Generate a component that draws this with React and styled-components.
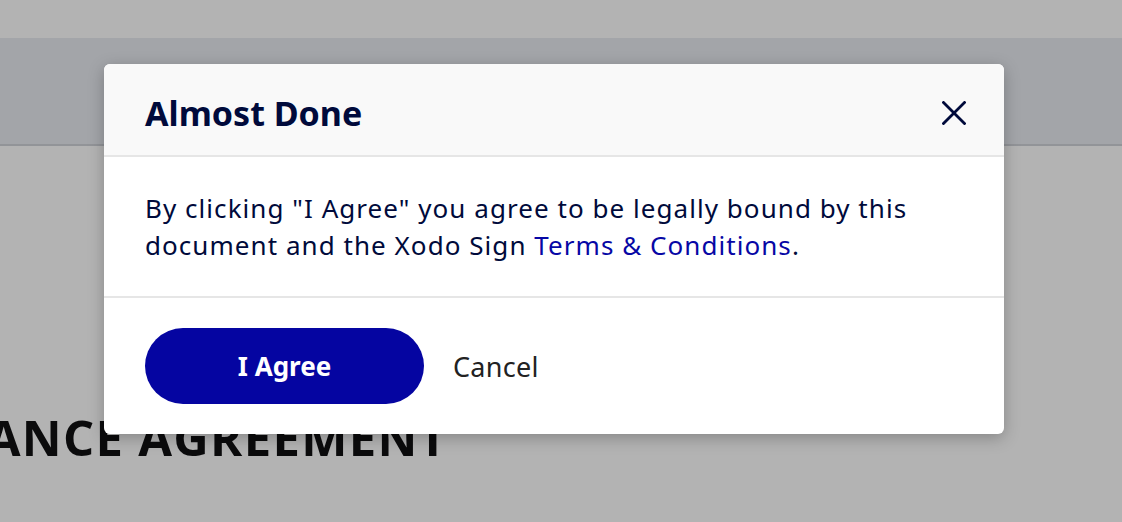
import React from 'react';
import styled, { createGlobalStyle } from 'styled-components';

const GlobalStyle = createGlobalStyle`
  html, body {
    margin: 0;
    padding: 0;
    background: #b3b3b3;
    overflow: hidden;
  }
  * { box-sizing: border-box; }
`;

const Page = styled.div`
  position: relative;
  width: 1122px;
  height: 522px;
  padding-top: 38px;
  background: #b3b3b3;
  font-family: "Noto Sans", "Open Sans", sans-serif;
  overflow: hidden;
`;

const TopBar = styled.div`
  height: 108px;
  background: #a3a5a9;
  border-bottom: 2px solid #929498;
`;

const DocTitle = styled.h1`
  margin: 258px 0 0 -204px;
  font-family: "Open Sans", sans-serif;
  font-weight: 700;
  font-size: 49px;
  letter-spacing: 1.3px;
  color: #0b0b0c;
  white-space: nowrap;
`;

const Modal = styled.div`
  position: absolute;
  left: 104px;
  top: 64px;
  width: 900px;
  background: #fff;
  border-radius: 6px;
  box-shadow: 0 4px 16px rgba(0, 0, 0, 0.25);
  overflow: hidden;
`;

const ModalHeader = styled.div`
  display: flex;
  align-items: center;
  justify-content: space-between;
  height: 93px;
  padding: 6px 37px 0 41px;
  background: #f9f9f9;
  border-bottom: 2px solid #e6e6e6;
`;

const Title = styled.h2`
  margin: 0;
  font-size: 34px;
  font-weight: 700;
  color: #000a3b;
`;

const CloseButton = styled.button`
  display: flex;
  align-items: center;
  justify-content: center;
  width: 26px;
  height: 26px;
  padding: 0;
  border: none;
  background: none;
  cursor: pointer;
`;

const ModalBody = styled.div`
  padding: 33px 41px 32px;
  border-bottom: 2px solid #e6e6e6;
`;

const Message = styled.p`
  margin: 0;
  max-width: 790px;
  font-size: 26px;
  letter-spacing: 1.05px;
  line-height: 37px;
  color: #000a3b;
`;

const Link = styled.a`
  color: #0707a5;
  text-decoration: none;
`;

const ModalFooter = styled.div`
  display: flex;
  align-items: center;
  gap: 29px;
  padding: 30px 41px 30px;
`;

const Button = styled.button`
  height: 76px;
  border: none;
  cursor: pointer;
  font-family: "Noto Sans", sans-serif;
  ${(p) =>
    p.$primary
      ? `
    width: 279px;
    border-radius: 38px;
    background: #0505a1;
    color: #fff;
    font-size: 26px;
    font-weight: 700;
  `
      : `
    padding: 0;
    background: none;
    color: #222;
    font-size: 27px;
    font-weight: 400;
    letter-spacing: 0.3px;
  `}
`;

export default function App() {
  return (
    <>
      <GlobalStyle />
      <Page>
        <TopBar />
        <DocTitle>ACCEPTANCE AGREEMENT</DocTitle>
        <Modal>
          <ModalHeader>
            <Title>Almost Done</Title>
            <CloseButton aria-label="Close">
              <svg width="24" height="24" viewBox="0 0 24 24">
                <path d="M1.5 1.5 L22.5 22.5 M22.5 1.5 L1.5 22.5" stroke="#000a3b" strokeWidth="2.8" strokeLinecap="square" />
              </svg>
            </CloseButton>
          </ModalHeader>
          <ModalBody>
            <Message>
              By clicking "I Agree" you agree to be legally bound by this document and the Xodo Sign{' '}
              <Link href="#">Terms &amp; Conditions</Link>.
            </Message>
          </ModalBody>
          <ModalFooter>
            <Button $primary>I Agree</Button>
            <Button>Cancel</Button>
          </ModalFooter>
        </Modal>
      </Page>
    </>
  );
}
